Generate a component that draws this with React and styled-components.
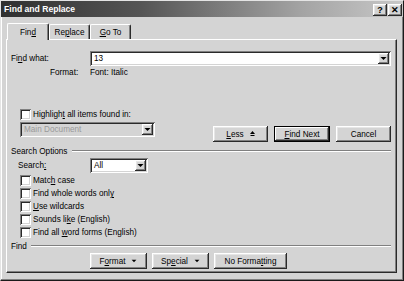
import React from 'react'
import styled, { createGlobalStyle, css } from 'styled-components'

const GlobalStyle = createGlobalStyle`
  html, body { margin: 0; padding: 0; background: #d4d4d4; }
  body { font-family: "Liberation Sans", Arial, sans-serif; }
`

const raised = css`
  background: #d4d4d4;
  box-shadow: inset -1px -1px #2a2a2a, inset 1px 1px #ffffff, inset -2px -2px #808080, inset 2px 2px #e6e6e6;
`

const sunken = css`
  box-shadow: inset 1px 1px #808080, inset -1px -1px #ffffff, inset 2px 2px #2a2a2a, inset -2px -2px #d4d4d4;
`

const Window = styled.div`
  width: 404px;
  height: 281px;
  box-sizing: border-box;
  background: #d4d4d4;
  border: 1px solid;
  border-color: #e4e4e4 #1a1a1a #1a1a1a #e4e4e4;
  box-shadow: inset -1px -1px #808080, inset 1px 1px #ffffff;
  display: flex;
  flex-direction: column;
  font-size: 8.2px;
  color: #000;
  overflow: hidden;
`

const TitleBar = styled.div`
  height: 16px;
  flex: none;
  display: flex;
  align-items: center;
  justify-content: space-between;
  padding: 0 1px 0 3px;
  background: linear-gradient(to right, #303030 0%, #555555 35%, #a4a4a4 75%, #c8c8c8 100%);
`

const Title = styled.span`
  color: #fff;
  font-weight: bold;
  font-size: 8.6px;
`

const CaptionButtons = styled.div`
  display: flex;
  gap: 1px;
  margin-top: 2px;
`

const CaptionButton = styled.div`
  ${raised};
  width: 14px;
  height: 12px;
  display: flex;
  align-items: center;
  justify-content: center;
  font-weight: bold;
  font-size: 9px;
  line-height: 1;
`

const Body = styled.div`
  flex: 1;
  display: flex;
  flex-direction: column;
  padding: 6px 6px 0 5px;
`

const Tabs = styled.div`
  display: flex;
  align-items: flex-end;
  height: 16px;
  padding-left: 1px;
  position: relative;
  z-index: 1;
`

const Tab = styled.div`
  width: ${p => p.w}px;
  height: ${p => (p.active ? 17 : 15)}px;
  box-sizing: border-box;
  background: #d4d4d4;
  border-top: 1px solid #fff;
  border-left: 1px solid #fff;
  border-right: 1px solid #2a2a2a;
  border-top-left-radius: 2px;
  border-top-right-radius: 2px;
  box-shadow: inset -1px 0 #808080;
  margin-bottom: ${p => (p.active ? -1 : 0)}px;
  display: flex;
  align-items: center;
  justify-content: center;
  padding-top: ${p => (p.active ? 0 : 1)}px;
`

const Panel = styled.div`
  border: 1px solid;
  border-color: #fff #2a2a2a #2a2a2a #fff;
  box-shadow: inset -1px -1px #808080;
  display: flex;
  flex-direction: column;
  padding: 11px 5px 3px 4px;
`

const Row = styled.div`
  display: flex;
  align-items: ${p => p.align || 'center'};
  height: ${p => p.h}px;
  margin-top: ${p => p.mt || 0}px;
  padding-left: ${p => p.pl || 0}px;
`

const Label = styled.span`
  width: ${p => (p.w ? p.w + 'px' : 'auto')};
  margin-left: ${p => p.ml || 0}px;
  white-space: nowrap;
  flex: none;
`

const Combo = styled.div`
  ${sunken};
  background: ${p => (p.disabled ? '#d4d4d4' : '#fff')};
  color: ${p => (p.disabled ? '#9a9a9a' : '#000')};
  width: ${p => (p.w ? p.w + 'px' : 'auto')};
  flex: ${p => (p.w ? 'none' : 1)};
  height: 15px;
  box-sizing: border-box;
  display: flex;
  align-items: center;
  padding: 2px 2px 2px 4px;
`

const ComboText = styled.span`
  flex: 1;
`

const ArrowButton = styled.div`
  ${raised};
  width: 11px;
  height: 11px;
  display: flex;
  align-items: center;
  justify-content: center;
`

const Check = styled.div`
  ${sunken};
  background: #fff;
  width: 11px;
  height: 11px;
  flex: none;
  margin-right: 2px;
`

const Button = styled.div`
  ${raised};
  width: ${p => p.w}px;
  height: 16px;
  box-sizing: border-box;
  display: flex;
  align-items: center;
  justify-content: center;
  gap: 6px;
  flex: none;
  ${p => p.primary && css`
    outline: 1px solid #000;
    outline-offset: -1px;
    box-shadow: inset -2px -2px #2a2a2a, inset 2px 2px #ffffff, inset -3px -3px #808080;
  `}
`

const ButtonGroup = styled.div`
  display: flex;
  gap: ${p => p.gap}px;
  margin-left: ${p => (p.ml === 'auto' ? 'auto' : p.ml + 'px')};
  align-self: flex-start;
  margin-top: ${p => p.mt || 0}px;
`

const Group = styled.div`
  display: flex;
  align-items: center;
  height: 12px;
  margin-top: ${p => p.mt || 0}px;
`

const GroupLine = styled.div`
  flex: 1;
  height: 0;
  border-top: 1px solid #808080;
  border-bottom: 1px solid #fff;
  margin-left: ${p => p.gap}px;
`

const Checks = styled.div`
  display: flex;
  flex-direction: column;
  margin-top: 1px;
`

const U = styled.span`
  text-decoration: underline;
  text-underline-offset: 1px;
`

const Down = ({ size = 5 }) => (
  <svg width={size + 2} height={size} viewBox="0 0 7 5">
    <path d="M0.5 1h6L3.5 4z" fill="#000" />
  </svg>
)

const UpMark = () => (
  <svg width="5" height="6" viewBox="0 0 5 6">
    <path d="M0 3h5L2.5 0z" fill="#000" />
    <rect x="0.5" y="4" width="4" height="1" fill="#000" />
  </svg>
)

const options = [
  <>Matc<U>h</U> case</>,
  <>Find whole words onl<U>y</U></>,
  <><U>U</U>se wildcards</>,
  <>Sounds li<U>k</U>e (English)</>,
  <>Find all <U>w</U>ord forms (English)</>,
]

export default function App() {
  return (
    <>
      <GlobalStyle />
      <Window>
        <TitleBar>
          <Title>Find and Replace</Title>
          <CaptionButtons>
            <CaptionButton>?</CaptionButton>
            <CaptionButton>✕</CaptionButton>
          </CaptionButtons>
        </TitleBar>
        <Body>
          <Tabs>
            <Tab w={42} active>Fin<U>d</U></Tab>
            <Tab w={41}>Re<U>p</U>lace</Tab>
            <Tab w={41}><U>G</U>o To</Tab>
          </Tabs>
          <Panel>
            <Row h={15}>
              <Label w={79}>Fi<U>n</U>d what:</Label>
              <Combo>
                <ComboText>13</ComboText>
                <ArrowButton><Down /></ArrowButton>
              </Combo>
            </Row>
            <Row h={12}>
              <Label w={40} ml={39}>Format:</Label>
              <Label>Font: Italic</Label>
            </Row>
            <Row h={12} mt={30} pl={9}>
              <Check />
              <Label>Highligh<U>t</U> all items found in:</Label>
            </Row>
            <Row h={21} mt={2} pl={9} align="flex-start">
              <Combo w={135} disabled>
                <ComboText>Main Document</ComboText>
                <ArrowButton><Down /></ArrowButton>
              </Combo>
              <ButtonGroup gap={6} ml="auto" mt={4}>
                <Button w={55}><span><U>L</U>ess</span><UpMark /></Button>
                <Button w={56} primary><span><U>F</U>ind Next</span></Button>
                <Button w={55}>Cancel</Button>
              </ButtonGroup>
            </Row>
            <Group mt={2}>
              <Label>Search Options</Label>
              <GroupLine gap={5} />
            </Group>
            <Row h={15} mt={1}>
              <Label w={72} ml={7}>Search<U>:</U></Label>
              <Combo w={58}>
                <ComboText>All</ComboText>
                <ArrowButton><Down /></ArrowButton>
              </Combo>
            </Row>
            <Checks>
              {options.map((text, i) => (
                <Row key={i} h={13} pl={9}>
                  <Check />
                  <Label>{text}</Label>
                </Row>
              ))}
            </Checks>
            <Group mt={1}>
              <Label>Find</Label>
              <GroupLine gap={4} />
            </Group>
            <ButtonGroup gap={5} ml={79} mt={1}>
              <Button w={57}><span>F<U>o</U>rmat</span><Down size={4} /></Button>
              <Button w={57}><span>Sp<U>e</U>cial</span><Down size={4} /></Button>
              <Button w={73}><span>No Forma<U>t</U>ting</span></Button>
            </ButtonGroup>
          </Panel>
        </Body>
      </Window>
    </>
  )
}
